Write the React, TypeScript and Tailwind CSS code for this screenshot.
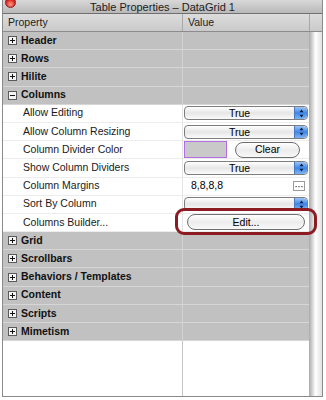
import React from "react";

type Row =
  | { kind: "group"; label: string; open?: boolean }
  | { kind: "prop"; label: string; value: React.ReactNode };

function ToggleBox({ open }: { open?: boolean }) {
  return (
    <span className="flex h-[9px] w-[9px] items-center justify-center border border-[#5a5a5a] bg-[#f4f4f4]">
      <svg width="7" height="7" viewBox="0 0 7 7">
        <rect x="1" y="3" width="5" height="1" fill="#111" />
        {!open && <rect x="3" y="1" width="1" height="5" fill="#111" />}
      </svg>
    </span>
  );
}

function Stepper() {
  return (
    <span className="flex h-full w-[13px] items-center justify-center rounded-r-[4px] border-l border-[#4a78c0] bg-gradient-to-b from-[#9cc4f4] via-[#3f86e6] to-[#7fb4f2]">
      <svg width="5" height="9" viewBox="0 0 5 9">
        <path d="M2.5 0.5 L4.5 3.3 L0.5 3.3 Z" fill="#0a1a40" />
        <path d="M2.5 8.5 L4.5 5.7 L0.5 5.7 Z" fill="#0a1a40" />
      </svg>
    </span>
  );
}

function Popup({ value }: { value?: string }) {
  return (
    <div className="ml-[1px] flex h-[14px] w-[124px] items-stretch overflow-hidden rounded-[4px] border border-[#7d7d7d] bg-gradient-to-b from-white via-[#e6e6e6] to-[#fafafa]">
      <span className="flex-1 text-center text-[10.5px] leading-[12px] text-black">{value}</span>
      <Stepper />
    </div>
  );
}

function Pill({ label, wide }: { label: string; wide?: boolean }) {
  return (
    <div
      className={
        "flex h-[16px] items-center justify-center rounded-full border border-[#6e6e6e] bg-gradient-to-b from-white via-[#ececec] to-[#f8f8f8] text-[10.5px] text-black " +
        (wide ? "w-[118px]" : "w-[65px]")
      }
    >
      {label}
    </div>
  );
}

const rows: Row[] = [
  { kind: "group", label: "Header" },
  { kind: "group", label: "Rows" },
  { kind: "group", label: "Hilite" },
  { kind: "group", label: "Columns", open: true },
  { kind: "prop", label: "Allow Editing", value: <Popup value="True" /> },
  { kind: "prop", label: "Allow Column Resizing", value: <Popup value="True" /> },
  {
    kind: "prop",
    label: "Column Divider Color",
    value: (
      <div className="flex items-center gap-[8px] pl-[1px]">
        <span className="h-[17px] w-[43px] border border-[#b46ee0] bg-[#c9c9c9]" />
        <Pill label="Clear" />
      </div>
    ),
  },
  { kind: "prop", label: "Show Column Dividers", value: <Popup value="True" /> },
  {
    kind: "prop",
    label: "Column Margins",
    value: (
      <div className="flex flex-1 items-center justify-between pl-[8px] pr-[4px]">
        <span className="text-[10.5px] text-black">8,8,8,8</span>
        <span className="flex h-[10px] w-[12px] items-center justify-center border border-[#9a9a9a] bg-white">
          <svg width="8" height="4" viewBox="0 0 8 4">
            <rect x="0.5" y="2" width="1.2" height="1.2" fill="#444" />
            <rect x="3.4" y="2" width="1.2" height="1.2" fill="#444" />
            <rect x="6.3" y="2" width="1.2" height="1.2" fill="#444" />
          </svg>
        </span>
      </div>
    ),
  },
  { kind: "prop", label: "Sort By Column", value: <Popup /> },
  {
    kind: "prop",
    label: "Columns Builder...",
    value: (
      <div className="relative pl-[4px]">
        <Pill label="Edit..." wide />
        <span className="absolute left-[-8px] top-[-6px] h-[27px] w-[142px] rounded-[9px] border-[3px] border-[#8c1b22]" />
      </div>
    ),
  },
  { kind: "group", label: "Grid" },
  { kind: "group", label: "Scrollbars" },
  { kind: "group", label: "Behaviors / Templates" },
  { kind: "group", label: "Content" },
  { kind: "group", label: "Scripts" },
  { kind: "group", label: "Mimetism" },
];

export default function App() {
  return (
    <div
      className="h-[400px] w-[326px] overflow-hidden bg-white"
      style={{ fontFamily: '"Liberation Sans", Arial, sans-serif' }}
    >
      <div className="ml-[2px] flex h-[397px] w-[321px] flex-col border-x border-b border-[#8a8a8a]">
        {/* title bar */}
        <div className="relative flex h-[14px] items-center justify-center border-b border-[#6f6f6f] bg-gradient-to-b from-[#d8d8d8] to-[#b9b9b9]">
          <span className="absolute left-[2px] top-[-3px] h-[11px] w-[11px] rounded-full border border-[#8a1e1e] bg-[radial-gradient(circle_at_50%_70%,#ff9a8a,#d8251f_60%,#9a1010)]" />
          <span className="text-[11px] leading-[12px] text-[#1c1c1c]">Table Properties – DataGrid 1</span>
        </div>

        {/* column headers */}
        <div className="flex h-[18px] border-b border-[#8c8c8c] bg-gradient-to-b from-[#dcdcdc] to-[#cacaca] text-[10.5px] text-[#222]">
          <div className="flex w-[179px] items-center pl-[5px]">Property</div>
          <div className="flex flex-1 items-center border-l border-[#a8a8a8] pl-[5px]">Value</div>
          <div className="w-[13px] border-l border-[#a8a8a8]" />
        </div>

        <div className="flex flex-1">
          <div className="relative flex flex-1 flex-col">
            {rows.map((r) =>
              r.kind === "group" ? (
                <div
                  key={r.label}
                  className="flex h-[18.2px] border-b border-[#d6d6d6] bg-[#c1c1c1]"
                >
                  <div className="flex w-[179px] items-center gap-[4px] pl-[5px] text-[10.5px] font-bold text-[#111]">
                    <ToggleBox open={r.open} />
                    {r.label}
                  </div>
                  <div className="flex-1 border-l border-[#d2d2d2]" />
                </div>
              ) : (
                <div key={r.label} className="flex h-[18.2px] border-b border-[#ececec] bg-white">
                  <div className="flex w-[179px] items-center pl-[20px] text-[10.5px] text-[#1a1a1a]">
                    {r.label}
                  </div>
                  <div className="flex flex-1 items-center border-l border-[#e4e4e4]">{r.value}</div>
                </div>
              ),
            )}
            <div className="flex flex-1 bg-white">
              <div className="w-[179px]" />
              <div className="flex-1 border-l border-[#c4c4c4]" />
            </div>
          </div>
          {/* scrollbar track */}
          <div className="w-[13px] bg-gradient-to-r from-[#a9a9a9] via-white to-[#e2e2e2]" />
        </div>
      </div>
    </div>
  );
}
